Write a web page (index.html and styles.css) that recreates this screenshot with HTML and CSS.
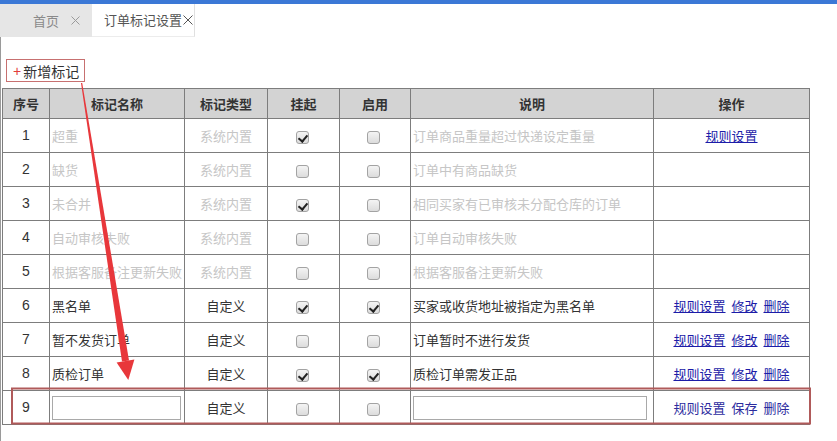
FILE: index.html
```html
<!DOCTYPE html>
<html lang="zh-CN">
<head>
<meta charset="utf-8">
<title>订单标记设置</title>
<link rel="stylesheet" href="styles.css">
</head>
<body>
<div class="topbar"></div>
<div class="tabs">
  <div class="tab">
    <span class="tab-label">首页</span>
    <svg class="tab-close" width="9" height="9" viewBox="0 0 9 9"><path d="M0.5 0.5 L8.5 8.5 M8.5 0.5 L0.5 8.5" stroke="#9a9a9a" stroke-width="1" fill="none"/></svg>
  </div>
  <div class="tab active">
    <span class="tab-label">订单标记设置</span>
    <svg class="tab-close" width="10" height="10" viewBox="0 0 10 10"><path d="M0.5 0.5 L9.5 9.5 M9.5 0.5 L0.5 9.5" stroke="#555" stroke-width="1" fill="none"/></svg>
  </div>
</div>
<div class="content">
  <div class="toolbar">
    <button class="add-btn"><span class="plus">+</span>新增标记</button>
  </div>
  <table class="grid">
    <colgroup>
      <col class="c-no"><col class="c-name"><col class="c-type"><col class="c-hang"><col class="c-on"><col class="c-desc"><col class="c-op">
    </colgroup>
    <thead>
      <tr><th>序号</th><th>标记名称</th><th>标记类型</th><th>挂起</th><th>启用</th><th>说明</th><th>操作</th></tr>
    </thead>
    <tbody>
      <tr class="sys">
        <td class="no">1</td><td class="name">超重</td><td class="type">系统内置</td>
        <td class="ck"><span class="cb on"></span></td><td class="ck"><span class="cb"></span></td>
        <td class="desc">订单商品重量超过快递设定重量</td>
        <td class="op"><a href="#">规则设置</a></td>
      </tr>
      <tr class="sys">
        <td class="no">2</td><td class="name">缺货</td><td class="type">系统内置</td>
        <td class="ck"><span class="cb"></span></td><td class="ck"><span class="cb"></span></td>
        <td class="desc">订单中有商品缺货</td>
        <td class="op"></td>
      </tr>
      <tr class="sys">
        <td class="no">3</td><td class="name">未合并</td><td class="type">系统内置</td>
        <td class="ck"><span class="cb on"></span></td><td class="ck"><span class="cb"></span></td>
        <td class="desc">相同买家有已审核未分配仓库的订单</td>
        <td class="op"></td>
      </tr>
      <tr class="sys">
        <td class="no">4</td><td class="name">自动审核失败</td><td class="type">系统内置</td>
        <td class="ck"><span class="cb"></span></td><td class="ck"><span class="cb"></span></td>
        <td class="desc">订单自动审核失败</td>
        <td class="op"></td>
      </tr>
      <tr class="sys">
        <td class="no">5</td><td class="name">根据客服备注更新失败</td><td class="type">系统内置</td>
        <td class="ck"><span class="cb"></span></td><td class="ck"><span class="cb"></span></td>
        <td class="desc">根据客服备注更新失败</td>
        <td class="op"></td>
      </tr>
      <tr>
        <td class="no">6</td><td class="name">黑名单</td><td class="type">自定义</td>
        <td class="ck"><span class="cb on"></span></td><td class="ck"><span class="cb on"></span></td>
        <td class="desc">买家或收货地址被指定为黑名单</td>
        <td class="op"><a href="#">规则设置</a><a href="#">修改</a><a href="#">删除</a></td>
      </tr>
      <tr>
        <td class="no">7</td><td class="name">暂不发货订单</td><td class="type">自定义</td>
        <td class="ck"><span class="cb"></span></td><td class="ck"><span class="cb"></span></td>
        <td class="desc">订单暂时不进行发货</td>
        <td class="op"><a href="#">规则设置</a><a href="#">修改</a><a href="#">删除</a></td>
      </tr>
      <tr>
        <td class="no">8</td><td class="name">质检订单</td><td class="type">自定义</td>
        <td class="ck"><span class="cb on"></span></td><td class="ck"><span class="cb on"></span></td>
        <td class="desc">质检订单需发正品</td>
        <td class="op"><a href="#">规则设置</a><a href="#">修改</a><a href="#">删除</a></td>
      </tr>
      <tr class="new">
        <td class="no">9</td><td class="name"><input class="txt name-input" type="text"></td><td class="type">自定义</td>
        <td class="ck"><span class="cb"></span></td><td class="ck"><span class="cb"></span></td>
        <td class="desc"><input class="txt desc-input" type="text"></td>
        <td class="op"><a href="#">规则设置</a><a href="#">保存</a><a href="#">删除</a></td>
      </tr>
    </tbody>
  </table>
</div>
<svg class="annot" width="837" height="441" viewBox="0 0 837 441">
  <rect x="12" y="388.5" width="798" height="35" fill="none" stroke="#b05a5a" stroke-width="2"/>
  <polygon points="81,83 82.2,83 129,360.4 122,361.6" fill="#e8373b"/>
  <polygon points="116.6,362.4 134.4,359.6 128.3,380" fill="#e8373b"/>
</svg>
</body>
</html>
```
FILE: styles.css
```css
* { box-sizing: border-box; }
html, body { margin: 0; padding: 0; background: #fff; }
body {
  position: relative;
  width: 837px;
  height: 441px;
  overflow: hidden;
  font-family: "Liberation Sans", "Noto Sans CJK SC", sans-serif;
  font-size: 13px;
  color: #333;
}
.topbar { height: 4px; background: #3b78d6; }
.tabs { display: flex; height: 33px; }
.tab {
  display: flex;
  align-items: center;
  height: 33px;
  background: #e6e6e6;
  color: #8a8a8a;
  width: 92px;
  padding-left: 33px;
}
.tab .tab-label { font-family: "Noto Sans CJK SC", sans-serif; font-size: 13px; line-height: 16px; }
.tab .tab-close { margin-left: 12px; }
.tab.active {
  background: #fff;
  color: #555;
  width: 103px;
  padding-left: 12px;
  border-right: 1px solid #e0e0e0;
  border-bottom: 1px solid #ececec;
}
.tab.active .tab-close { margin-left: 1px; }
.content {
  border-left: 1px solid #9a9a9a;
  height: 404px;
  padding-top: 22px;
}
.toolbar { padding-left: 5px; height: 23px; }
.add-btn {
  display: inline-flex;
  align-items: center;
  height: 23px;
  padding: 0 5px 0 6px;
  border: 1px solid #c77070;
  background: #fff;
  font-family: "Noto Sans CJK SC", sans-serif;
  font-size: 14px;
  color: #333;
  line-height: 16px;
}
.add-btn .plus { color: #e23b3b; font-family: "Liberation Sans", sans-serif; font-size: 14px; margin-right: 2px; }
.grid {
  margin-top: 6px;
  margin-left: 1px;
  border-collapse: collapse;
  table-layout: fixed;
  width: 807px;
  border: 1px solid #7d7d7d;
}
.c-no { width: 47px; }
.c-name { width: 135px; }
.c-type { width: 83px; }
.c-hang { width: 72px; }
.c-on { width: 71px; }
.c-desc { width: 243px; }
.c-op { width: 156px; }
.grid th, .grid td {
  border: 1px solid #7d7d7d;
  padding: 0 2px;
  line-height: 17px;
  vertical-align: middle;
  font-family: "Noto Sans CJK SC", sans-serif;
  font-size: 13px;
  white-space: nowrap;
  overflow: hidden;
}
.grid th {
  height: 30px;
  background: #d3d3d3;
  font-weight: bold;
  color: #333;
  text-align: center;
}
.grid td { height: 34px; color: #333; }
.grid td.no { text-align: center; font-family: "Liberation Sans", sans-serif; font-size: 14px; }
.grid td.type, .grid td.ck, .grid td.op { text-align: center; }
.grid tr.sys td.name, .grid tr.sys td.type, .grid tr.sys td.desc { color: #c6c6c6; }
.grid td.op a { color: #1c1ca8; text-decoration: underline; margin: 0 3px; }
.grid tr.new td.op a { text-decoration: none; color: #2b2b9e; }
.cb {
  display: inline-block;
  width: 13px;
  height: 13px;
  margin-right: 3px;
  border: 1px solid #a3a3a3;
  border-radius: 3px;
  background: linear-gradient(#f4f4f4, #dcdcdc);
  vertical-align: middle;
  position: relative;
}
.cb.on::after {
  content: "";
  position: absolute;
  left: 3px;
  top: 1px;
  width: 4px;
  height: 7px;
  border-right: 2px solid #222;
  border-bottom: 2px solid #222;
  transform: rotate(40deg);
}
.txt {
  display: block;
  height: 24px;
  border: 1px solid #a9a9a9;
  background: #fff;
  padding: 0 3px;
  font-size: 13px;
}
.name-input { width: 129px; }
.desc-input { width: 234px; }
.annot { position: absolute; left: 0; top: 0; pointer-events: none; }
```
